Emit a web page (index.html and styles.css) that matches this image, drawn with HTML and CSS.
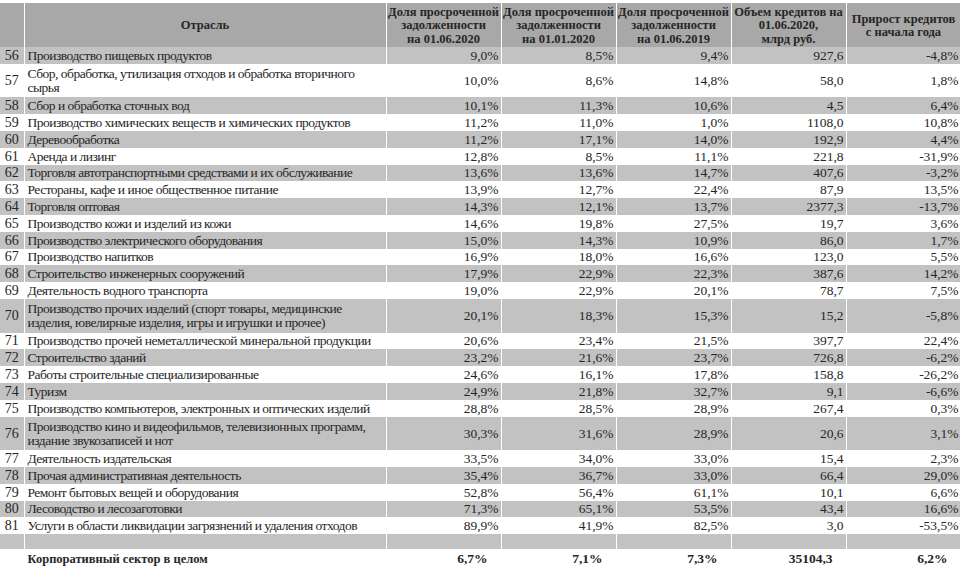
FILE: index.html
```html
<!DOCTYPE html>
<html lang="ru">
<head>
<meta charset="utf-8">
<title>Просроченная задолженность по отраслям</title>
<link rel="stylesheet" href="styles.css">
</head>
<body>
<table class="data">
  <colgroup>
    <col class="c-num"><col class="c-name"><col class="c-val"><col class="c-val"><col class="c-val"><col class="c-val"><col class="c-last">
  </colgroup>
  <thead>
    <tr class="head">
      <th></th>
      <th>Отрасль</th>
      <th>Доля просроченной<br>задолженности<br>на 01.06.2020</th>
      <th>Доля просроченной<br>задолженности<br>на 01.01.2020</th>
      <th>Доля просроченной<br>задолженности<br>на 01.06.2019</th>
      <th>Объем кредитов на<br>01.06.2020,<br>млрд руб.</th>
      <th>Прирост кредитов<br>с начала года</th>
    </tr>
  </thead>
  <tbody>
    <tr class="g"><td>56</td><td>Производство пищевых продуктов</td><td>9,0%</td><td>8,5%</td><td>9,4%</td><td>927,6</td><td>-4,8%</td></tr>
    <tr class="w dbl"><td>57</td><td>Сбор, обработка, утилизация отходов и обработка вторичного<br>сырья</td><td>10,0%</td><td>8,6%</td><td>14,8%</td><td>58,0</td><td>1,8%</td></tr>
    <tr class="g"><td>58</td><td>Сбор и обработка сточных вод</td><td>10,1%</td><td>11,3%</td><td>10,6%</td><td>4,5</td><td>6,4%</td></tr>
    <tr class="w"><td>59</td><td>Производство химических веществ и химических продуктов</td><td>11,2%</td><td>11,0%</td><td>1,0%</td><td>1108,0</td><td>10,8%</td></tr>
    <tr class="g"><td>60</td><td>Деревообработка</td><td>11,2%</td><td>17,1%</td><td>14,0%</td><td>192,9</td><td>4,4%</td></tr>
    <tr class="w"><td>61</td><td>Аренда и лизинг</td><td>12,8%</td><td>8,5%</td><td>11,1%</td><td>221,8</td><td>-31,9%</td></tr>
    <tr class="g"><td>62</td><td>Торговля автотранспортными средствами и их обслуживание</td><td>13,6%</td><td>13,6%</td><td>14,7%</td><td>407,6</td><td>-3,2%</td></tr>
    <tr class="w"><td>63</td><td>Рестораны, кафе и иное общественное питание</td><td>13,9%</td><td>12,7%</td><td>22,4%</td><td>87,9</td><td>13,5%</td></tr>
    <tr class="g"><td>64</td><td>Торговля оптовая</td><td>14,3%</td><td>12,1%</td><td>13,7%</td><td>2377,3</td><td>-13,7%</td></tr>
    <tr class="w"><td>65</td><td>Производство кожи и изделий из кожи</td><td>14,6%</td><td>19,8%</td><td>27,5%</td><td>19,7</td><td>3,6%</td></tr>
    <tr class="g"><td>66</td><td>Производство электрического оборудования</td><td>15,0%</td><td>14,3%</td><td>10,9%</td><td>86,0</td><td>1,7%</td></tr>
    <tr class="w"><td>67</td><td>Производство напитков</td><td>16,9%</td><td>18,0%</td><td>16,6%</td><td>123,0</td><td>5,5%</td></tr>
    <tr class="g"><td>68</td><td>Строительство инженерных сооружений</td><td>17,9%</td><td>22,9%</td><td>22,3%</td><td>387,6</td><td>14,2%</td></tr>
    <tr class="w"><td>69</td><td>Деятельность водного транспорта</td><td>19,0%</td><td>22,9%</td><td>20,1%</td><td>78,7</td><td>7,5%</td></tr>
    <tr class="g dbl"><td>70</td><td>Производство прочих изделий (спорт товары, медицинские<br>изделия, ювелирные изделия, игры и игрушки и прочее)</td><td>20,1%</td><td>18,3%</td><td>15,3%</td><td>15,2</td><td>-5,8%</td></tr>
    <tr class="w"><td>71</td><td>Производство прочей неметаллической минеральной продукции</td><td>20,6%</td><td>23,4%</td><td>21,5%</td><td>397,7</td><td>22,4%</td></tr>
    <tr class="g"><td>72</td><td>Строительство зданий</td><td>23,2%</td><td>21,6%</td><td>23,7%</td><td>726,8</td><td>-6,2%</td></tr>
    <tr class="w"><td>73</td><td>Работы строительные специализированные</td><td>24,6%</td><td>16,1%</td><td>17,8%</td><td>158,8</td><td>-26,2%</td></tr>
    <tr class="g"><td>74</td><td>Туризм</td><td>24,9%</td><td>21,8%</td><td>32,7%</td><td>9,1</td><td>-6,6%</td></tr>
    <tr class="w"><td>75</td><td>Производство компьютеров, электронных и оптических изделий</td><td>28,8%</td><td>28,5%</td><td>28,9%</td><td>267,4</td><td>0,3%</td></tr>
    <tr class="g dbl"><td>76</td><td>Производство кино и видеофильмов, телевизионных программ,<br>издание звукозаписей и нот</td><td>30,3%</td><td>31,6%</td><td>28,9%</td><td>20,6</td><td>3,1%</td></tr>
    <tr class="w"><td>77</td><td>Деятельность издательская</td><td>33,5%</td><td>34,0%</td><td>33,0%</td><td>15,4</td><td>2,3%</td></tr>
    <tr class="g"><td>78</td><td>Прочая административная деятельность</td><td>35,4%</td><td>36,7%</td><td>33,0%</td><td>66,4</td><td>29,0%</td></tr>
    <tr class="w"><td>79</td><td>Ремонт бытовых вещей и оборудования</td><td>52,8%</td><td>56,4%</td><td>61,1%</td><td>10,1</td><td>6,6%</td></tr>
    <tr class="g"><td>80</td><td>Лесоводство и лесозаготовки</td><td>71,3%</td><td>65,1%</td><td>53,5%</td><td>43,4</td><td>16,6%</td></tr>
    <tr class="w"><td>81</td><td>Услуги в области ликвидации загрязнений и удаления отходов</td><td>89,9%</td><td>41,9%</td><td>82,5%</td><td>3,0</td><td>-53,5%</td></tr>
    <tr class="g empty"><td></td><td></td><td></td><td></td><td></td><td></td><td></td></tr>
    <tr class="total"><td></td><td>Корпоративный сектор в целом</td><td>6,7%</td><td>7,1%</td><td>7,3%</td><td>35104,3</td><td>6,2%</td></tr>
  </tbody>
</table>
</body>
</html>
```
FILE: styles.css
```css
html, body {
  margin: 0;
  padding: 0;
  background: #ffffff;
}
body {
  padding-top: 3px;
  font-family: "Liberation Serif", "Times New Roman", serif;
  font-size: 13.5px;
  color: #262626;
  overflow: hidden;
}
.data {
  width: 961px;
  border-collapse: collapse;
  table-layout: fixed;
}
.c-num { width: 24px; }
.c-name { width: 362px; }
.c-val { width: 115px; }
.c-last { width: 115px; }

.data th, .data td {
  padding: 0 2px 0 3px;
  border-left: 1.5px solid #ffffff;
  border-right: 1.5px solid #ffffff;
  overflow: hidden;
  white-space: nowrap;
}
.data th:first-child, .data td:first-child {
  border-left: none;
}
.head th {
  height: 42px;
  background: #a8a8a8;
  font-weight: bold;
  font-size: 12.5px;
  text-align: center;
  line-height: 13.5px;
  padding: 2px 0 0;
}
.data td {
  height: 15.8px;
  line-height: 14px;
  text-align: right;
  vertical-align: middle;
  padding-top: 1px;
}
.data td:first-child {
  text-align: center;
  padding: 1px 0 0;
  font-size: 14px;
}
.data td:nth-child(2) {
  text-align: left;
  padding-left: 3px;
  letter-spacing: -0.5px;
}
.data tr.dbl td {
  height: 32.6px;
}
.g td { background: #c2c2c2; }
.w td { background: #ffffff; }
.data .empty td { height: 14px; }
.data .total td {
  height: 18px;
  font-weight: bold;
  background: #ffffff;
  padding-right: 13px;
}
.data .total td:nth-child(2) {
  letter-spacing: 0;
  font-size: 12.5px;
}
```
